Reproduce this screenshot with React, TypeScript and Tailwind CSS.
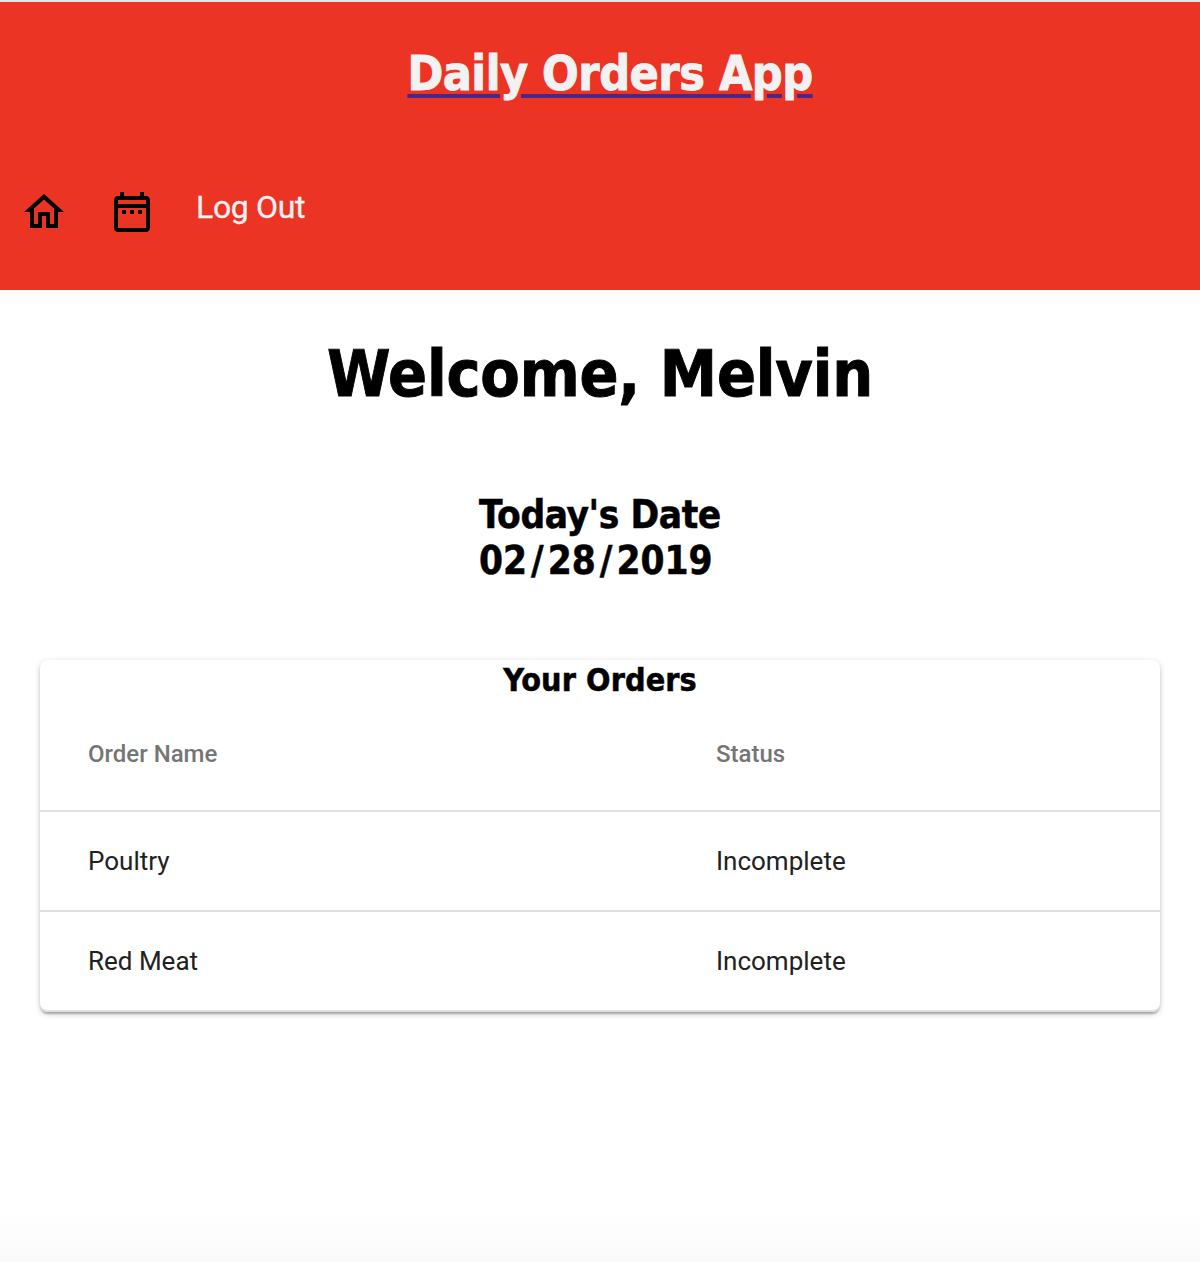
const orders = [
  { name: 'Poultry', status: 'Incomplete' },
  { name: 'Red Meat', status: 'Incomplete' },
];

function HomeIcon() {
  return (
    <svg className="block size-12" viewBox="0 0 24 24" fill="currentColor">
      <path d="M12 5.69l5 4.5V18h-2v-6H9v6H7v-7.81l5-4.5M12 3L2 12h3v8h6v-6h2v6h6v-8h3L12 3z" />
    </svg>
  );
}

function CalendarIcon() {
  return (
    <svg className="block size-12" viewBox="0 0 24 24" fill="currentColor" fillRule="evenodd">
      <path d="M7 11h2v2H7v-2zm4 0h2v2h-2v-2zm4 0h2v2h-2v-2zM19 4h-1V2h-2v2H8V2H6v2H5c-1.1 0-2 .9-2 2v14c0 1.1.9 2 2 2h14c1.1 0 2-.9 2-2V6c0-1.1-.9-2-2-2zM5 10h14v10H5V10zM5 6h14v2H5V6z" />
    </svg>
  );
}

export default function App() {
  return (
    <div className="h-[1262px] bg-linear-to-b from-white from-96% to-[#fafafa] text-black">
      <header className="h-[290px] border-t-2 border-[#e6e6e6] bg-[#eb3424]">
        <h1 className="flex h-[142px] justify-center pt-[41px] pl-5 font-['DejaVu_Sans_Condensed','DejaVu_Sans',sans-serif] text-[48px] leading-[60px] font-bold tracking-[-0.5px] text-[#f2f2f2] [font-stretch:condensed] [-webkit-text-stroke:0.9px_#f2f2f2]">
          <a className="underline decoration-[#4b2588] decoration-4 underline-offset-[4px]" href="#home">Daily Orders App</a>
        </h1>
        <nav className="flex items-start pt-[44px] pl-5 font-[Roboto,sans-serif]">
          <a href="#home"><HomeIcon /></a>
          <a className="ml-10" href="#calendar"><CalendarIcon /></a>
          <a className="-mt-px ml-10 text-[32px] leading-10 tracking-[-0.35px] text-[#f2f2f2] [-webkit-text-stroke:0.3px_#f2f2f2]" href="#logout">Log Out</a>
        </nav>
      </header>
      <main className="font-['DejaVu_Sans_Condensed','DejaVu_Sans',sans-serif] [font-stretch:condensed]">
        <h2 className="pt-[44px] text-center text-[64px] leading-[80px] font-bold tracking-[-0.2px] [-webkit-text-stroke:0.9px_black]">Welcome, Melvin</h2>
        <div className="mx-auto mt-[78px] flex h-[92px] w-[242px] flex-col text-[38.4px] leading-[46px] font-bold whitespace-nowrap [-webkit-text-stroke:0.5px_black]">
          <p className="tracking-[-0.4px]">Today's Date</p>
          <p>
            02<span className="mx-1">/</span>28<span className="mx-1">/</span>2019
          </p>
        </div>
        <section className="mx-10 mt-[76px] h-[352px] rounded-lg bg-white shadow-[0_2px_6px_rgba(0,0,0,0.2),0_2px_2px_rgba(0,0,0,0.14),0_4px_2px_-2px_rgba(0,0,0,0.12)]">
          <h3 className="h-[38px] text-center text-[32px] leading-10 font-bold tracking-[0.1px] [-webkit-text-stroke:0.5px_black]">Your Orders</h3>
          <table className="w-full table-fixed border-separate border-spacing-0 font-[Roboto,sans-serif] text-[26px] [font-stretch:normal]">
            <thead>
              <tr className="h-[114px] text-left text-2xl text-[#757575]">
                <th className="w-[628px] border-b-2 border-[#e0e0e0] pl-12 font-medium">Order Name</th>
                <th className="border-b-2 border-[#e0e0e0] pl-12 font-medium">Status</th>
              </tr>
            </thead>
            <tbody className="text-[#212121]">
              {orders.map((order) => (
                <tr key={order.name} className="h-[100px]">
                  <td className="border-b-2 border-[#e0e0e0] pl-12 [tr:last-child>&]:rounded-bl-lg">{order.name}</td>
                  <td className="border-b-2 border-[#e0e0e0] pl-12 [tr:last-child>&]:rounded-br-lg">{order.status}</td>
                </tr>
              ))}
            </tbody>
          </table>
        </section>
      </main>
    </div>
  );
}
